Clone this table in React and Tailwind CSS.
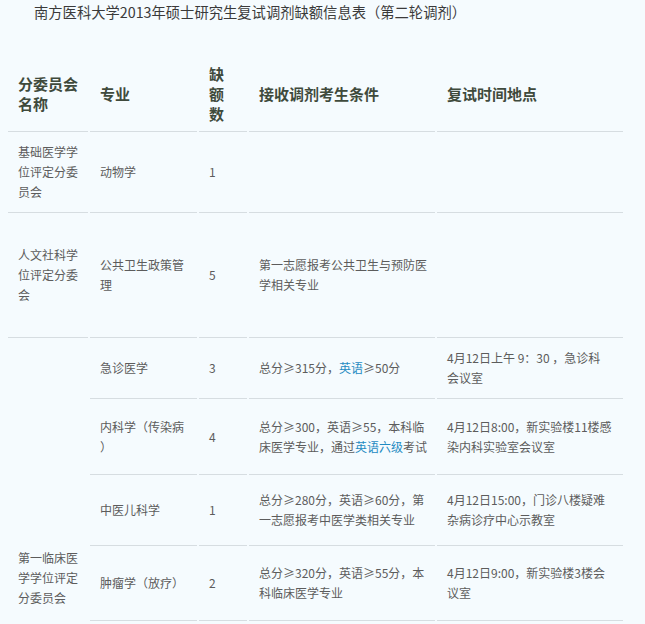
const rows = [
  {
    h: 'h-[81px]',
    unit: '基础医学学位评定分委员会',
    major: '动物学',
    num: '1',
    cond: null,
    time: null,
  },
  {
    h: 'h-[125px]',
    unit: '人文社科学位评定分委会',
    major: '公共卫生政策管理',
    num: '5',
    cond: '第一志愿报考公共卫生与预防医学相关专业',
    time: null,
  },
];

const clinical = [
  {
    h: 'h-[61px]',
    major: '急诊医学',
    num: '3',
    cond: (
      <>
        总分≥315分，<span className="text-[#1f8bc2]">英语</span>≥50分
      </>
    ),
    time: (
      <>
        4月12日上午 9：30 ，急诊科<br />会议室
      </>
    ),
  },
  {
    h: 'h-[76px]',
    major: (
      <>
        内科学（传染病<br />）
      </>
    ),
    num: '4',
    cond: (
      <>
        总分≥300，英语≥55，本科临床医学专业，通过<span className="text-[#1f8bc2]">英语六级</span>考试
      </>
    ),
    time: '4月12日8:00，新实验楼11楼感染内科实验室会议室',
  },
  {
    h: 'h-[71px]',
    major: '中医儿科学',
    num: '1',
    cond: '总分≥280分，英语≥60分，第一志愿报考中医学类相关专业',
    time: '4月12日15:00，门诊八楼疑难杂病诊疗中心示教室',
  },
  {
    h: 'h-[75px]',
    major: '肿瘤学（放疗）',
    num: '2',
    cond: '总分≥320分，英语≥55分，本科临床医学专业',
    time: '4月12日9:00，新实验楼3楼会议室',
  },
];

const cell = 'border-b border-[#d6dde1] align-middle pl-[10px] py-[2px]';

export default function App() {
  return (
    <div
      className="min-h-screen bg-[#f5fbfe] pl-[6px] text-[12px] leading-[20px] text-[#5c5c5c]"
      style={{ fontFamily: '"Noto Sans CJK SC", "Noto Sans", sans-serif' }}
    >
      <p className="pl-[28px] text-[14.3px] leading-[24px] text-[#3a3a3a]">
        南方医科大学2013年硕士研究生复试调剂缺额信息表（第二轮调剂）
      </p>

      <table className="mt-[32px] table-fixed w-[619px] border-separate border-spacing-x-[2px] border-spacing-y-0">
        <thead>
          <tr className="text-[15px] font-bold text-[#3f4a3c] text-left">
            <th className={`${cell} h-[76px] w-[80px] pr-[10px]`}>分委员会名称</th>
            <th className={`${cell} w-[107px] pr-[10px]`}>专业</th>
            <th className={`${cell} w-[48px] pr-[10px]`}>缺额数</th>
            <th className={`${cell} w-[186px] pr-[4px]`}>接收调剂考生条件</th>
            <th className={`${cell} w-[186px] pr-[10px]`}>复试时间地点</th>
          </tr>
        </thead>
        <tbody>
          {rows.map((r) => (
            <tr key={r.num + r.unit}>
              <td className={`${cell} ${r.h} pr-[10px]`}>{r.unit}</td>
              <td className={`${cell} pr-[10px]`}>{r.major}</td>
              <td className={`${cell} pr-[10px]`}>{r.num}</td>
              <td className={`${cell} pr-[4px]`}>{r.cond}</td>
              <td className={`${cell} pr-[10px]`}>{r.time}</td>
            </tr>
          ))}
          {clinical.map((r, i) => (
            <tr key={i}>
              {i === 0 && (
                <td rowSpan={5} className={`${cell} pr-[10px]`}>
                  第一临床医学学位评定分委员会
                </td>
              )}
              <td className={`${cell} ${r.h} pr-[10px]`}>{r.major}</td>
              <td className={`${cell} pr-[10px]`}>{r.num}</td>
              <td className={`${cell} pr-[4px]`}>{r.cond}</td>
              <td className={`${cell} pr-[10px]`}>{r.time}</td>
            </tr>
          ))}
          <tr>
            <td className={`${cell} h-[197px]`}></td>
            <td className={cell}></td>
            <td className={cell}></td>
            <td className={cell}></td>
          </tr>
        </tbody>
      </table>
    </div>
  );
}
